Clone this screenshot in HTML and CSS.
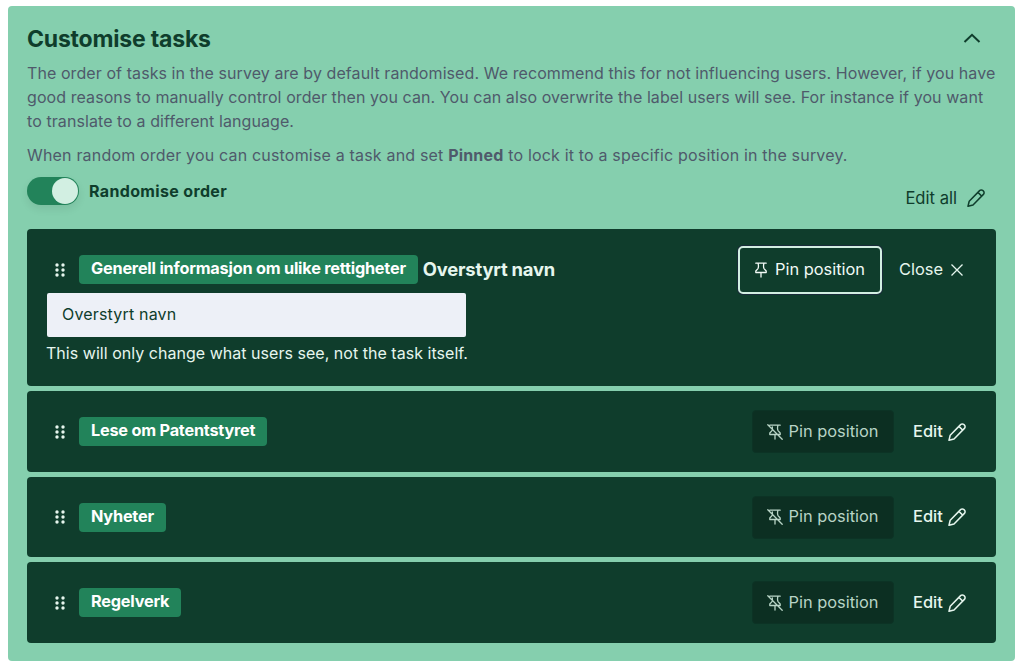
FILE: index.html
```html
<!DOCTYPE html>
<html lang="en">

<head>
    <meta charset="UTF-8">
    <meta name="viewport" content="width=device-width, initial-scale=1.0">
    <title>Customise tasks</title>
    <link rel="stylesheet" href="styles.css">
</head>

<body>
    <svg class="sprites" width="0" height="0">
        <symbol id="grip" viewBox="0 0 10 14">
            <circle cx="2" cy="2" r="1.7" /><circle cx="8" cy="2" r="1.7" />
            <circle cx="2" cy="7" r="1.7" /><circle cx="8" cy="7" r="1.7" />
            <circle cx="2" cy="12" r="1.7" /><circle cx="8" cy="12" r="1.7" />
        </symbol>
        <symbol id="pencil" viewBox="0 0 20 20">
            <path d="M13.600 2.600a2.300 2.300 0 0 1 3.300 0l.5.5a2.300 2.300 0 0 1 0 3.300L7 17 2 18.200 3.200 13.200z M12 4.400l3.800 3.800" fill="none" stroke="currentColor" stroke-width="1.500" stroke-linejoin="round" />
        </symbol>
        <symbol id="pin" viewBox="0 0 16 16">
            <path d="M2.800 1.200h10.400M5 1.200c.6 1.800.6 3.800 0 5.400L2.800 9v1.500h10.400V9L11 6.600c-.6-1.600-.6-3.600 0-5.400M8 10.500v4.500" fill="none" stroke="currentColor" stroke-width="1.300" stroke-linejoin="round" stroke-linecap="round" />
        </symbol>
        <symbol id="pin-off" viewBox="0 0 16 16">
            <path d="M2.800 1.200h10.400M5.300 2.800c.2 1.300.1 2.600-.3 3.800L2.800 9v1.500h10.400V9L11 6.600c-.6-1.600-.6-3.600 0-5.400M8 10.500v4.500M.8 .8l14.400 14.400" fill="none" stroke="currentColor" stroke-width="1.300" stroke-linejoin="round" stroke-linecap="round" />
        </symbol>
    </svg>

    <div class="panel">
        <div class="panel-head">
            <h2>Customise tasks</h2>
            <svg class="chevron" viewBox="0 0 18 10" width="18" height="10">
                <path d="M1.500 9L9 1.800 16.500 9" fill="none" stroke="currentColor" stroke-width="2" />
            </svg>
        </div>
        <p class="intro">The order of tasks in the survey are by default randomised. We recommend this for not influencing users. However, if you have good reasons to manually control order then you can. You can also overwrite the label users will see. For instance if you want to translate to a different language.</p>
        <p class="intro second">When random order you can customise a task and set <b>Pinned</b> to lock it to a specific position in the survey.</p>

        <div class="options">
            <div class="toggle-row">
                <span class="toggle"><span class="knob"></span></span>
                <span class="toggle-label">Randomise order</span>
            </div>
            <a class="edit-all" href="#">Edit all <svg width="20" height="20"><use href="#pencil" /></svg></a>
        </div>

        <div class="task-list">
            <div class="task open">
                <div class="task-row">
                    <svg class="grip" width="10" height="14"><use href="#grip" /></svg>
                    <span class="tag">Generell informasjon om ulike rettigheter</span>
                    <span class="override">Overstyrt navn</span>
                    <button class="pin active"><svg width="16" height="16"><use href="#pin" /></svg>Pin position</button>
                    <a class="action close" href="#">Close
                        <svg width="14" height="14" viewBox="0 0 14 14"><path d="M1.500 1.500l11 11M12.500 1.500l-11 11" fill="none" stroke="currentColor" stroke-width="1.300" /></svg>
                    </a>
                </div>
                <input class="name-input" type="text" value="Overstyrt navn">
                <p class="hint">This will only change what users see, not the task itself.</p>
            </div>

            <div class="task">
                <div class="task-row">
                    <svg class="grip" width="10" height="14"><use href="#grip" /></svg>
                    <span class="tag">Lese om Patentstyret</span>
                    <button class="pin"><svg width="16" height="16"><use href="#pin-off" /></svg>Pin position</button>
                    <a class="action" href="#">Edit <svg width="20" height="20"><use href="#pencil" /></svg></a>
                </div>
            </div>

            <div class="task">
                <div class="task-row">
                    <svg class="grip" width="10" height="14"><use href="#grip" /></svg>
                    <span class="tag">Nyheter</span>
                    <button class="pin"><svg width="16" height="16"><use href="#pin-off" /></svg>Pin position</button>
                    <a class="action" href="#">Edit <svg width="20" height="20"><use href="#pencil" /></svg></a>
                </div>
            </div>

            <div class="task">
                <div class="task-row">
                    <svg class="grip" width="10" height="14"><use href="#grip" /></svg>
                    <span class="tag">Regelverk</span>
                    <button class="pin"><svg width="16" height="16"><use href="#pin-off" /></svg>Pin position</button>
                    <a class="action" href="#">Edit <svg width="20" height="20"><use href="#pencil" /></svg></a>
                </div>
            </div>
        </div>
    </div>
</body>

</html>
```

FILE: styles.css
```css
body {
    font-family: Inter, "Liberation Sans", sans-serif;
    margin: 0;
    padding: 6px 9px 8px 8px;
    background-color: white;
    color: #0f3d2c;
}

.sprites {
    position: absolute;
}

.panel {
    background-color: #85cfae;
    border-radius: 4px;
    padding: 18px 19px 18px 19px;
    height: 619px;
}

.panel-head {
    display: flex;
    justify-content: space-between;
    align-items: center;
    padding-right: 15px;
    height: 28px;
}

.panel-head h2 {
    margin: 2px 0 0;
    font-size: 23px;
    font-weight: 700;
    letter-spacing: -0.2px;
}

.chevron {
    color: #0f3d2c;
}

.intro {
    margin: 9px 0 0;
    font-size: 16px;
    letter-spacing: 0.08px;
    line-height: 24px;
    color: #4f5a6b;
}

.intro.second {
    margin-top: 10px;
    letter-spacing: 0.18px;
}

.intro b {
    font-weight: 700;
}

.options {
    display: flex;
    justify-content: space-between;
    align-items: flex-start;
    margin-top: 10px;
    height: 52px;
    padding-right: 10px;
}

.toggle-row {
    display: flex;
    align-items: center;
    gap: 10px;
}

.toggle {
    display: flex;
    justify-content: flex-end;
    align-items: center;
    width: 52px;
    height: 28px;
    box-sizing: border-box;
    padding: 0 1px;
    border-radius: 14px;
    background-color: #22835a;
    box-shadow: 0 4px 8px rgba(0, 0, 0, 0.08);
}

.knob {
    width: 26px;
    height: 26px;
    border-radius: 50%;
    background-color: #d2efe2;
}

.toggle-label {
    font-size: 16px;
    font-weight: 700;
    letter-spacing: 0.35px;
}

.edit-all {
    display: flex;
    align-items: center;
    gap: 9px;
    margin-top: 11px;
    font-size: 16.600px;
    color: #0f3d2c;
    text-decoration: none;
}

.task-list {
    display: flex;
    flex-direction: column;
    gap: 5px;
}

.task {
    background-color: #0f3d2c;
    border-radius: 4px;
    padding: 19px 29px 18.500px 19px;
    color: #e6f6ee;
}

.task.open {
    padding-bottom: 22px;
}

.task-row {
    display: flex;
    align-items: center;
    height: 43px;
}

.grip {
    fill: #e6f6ee;
    margin: 0 14px 0 9px;
}

.tag {
    background-color: #22835a;
    color: white;
    font-size: 16.300px;
    font-weight: 700;
    letter-spacing: -0.22px;
    padding: 4px 12px 6px;
    line-height: 19px;
    border-radius: 4px;
}

.override {
    margin-left: 5px;
    padding-bottom: 2px;
    font-size: 18.400px;
    font-weight: 700;
    letter-spacing: -0.2px;
    color: #e6f6ee;
}

.pin {
    display: flex;
    align-items: center;
    justify-content: center;
    gap: 5px;
    margin-left: auto;
    width: 142px;
    height: 43px;
    padding: 0 0 2px;
    font-family: inherit;
    font-size: 16.400px;
    color: #b8d4c6;
    background-color: #0c2f22;
    border: 1px solid #0c3325;
    border-radius: 4px;
}

.pin svg {
    margin-top: 2px;
}

.pin.active {
    width: 144px;
    height: 48px;
    padding-right: 2px;
    gap: 6px;
    color: #f2faf6;
    background-color: #0f3d2c;
    border: 2px solid #d2efe2;
    border-radius: 5px;
    box-shadow: 0 0 0 1px #1a2b3a;
}

.action {
    display: flex;
    align-items: center;
    gap: 4px;
    width: 54px;
    margin-left: 19px;
    padding-bottom: 2px;
    font-size: 16.400px;
    font-weight: 500;
    color: #e6f6ee;
    text-decoration: none;
}

.action svg {
    margin-top: 2px;
}

.action.close {
    gap: 7px;
    width: 68px;
    margin-left: 17px;
    font-weight: 400;
}

.name-input {
    display: block;
    box-sizing: border-box;
    width: 419px;
    height: 44px;
    margin: 2px 0 0 1px;
    padding: 0 15px 2px;
    border: none;
    border-radius: 2px;
    background-color: #edf0f7;
    font-family: inherit;
    font-size: 16px;
    letter-spacing: 0.18px;
    color: #0f3d2c;
}

.hint {
    margin: 5px 0 0;
    font-size: 16px;
    letter-spacing: 0.03px;
    line-height: 22px;
}
```
